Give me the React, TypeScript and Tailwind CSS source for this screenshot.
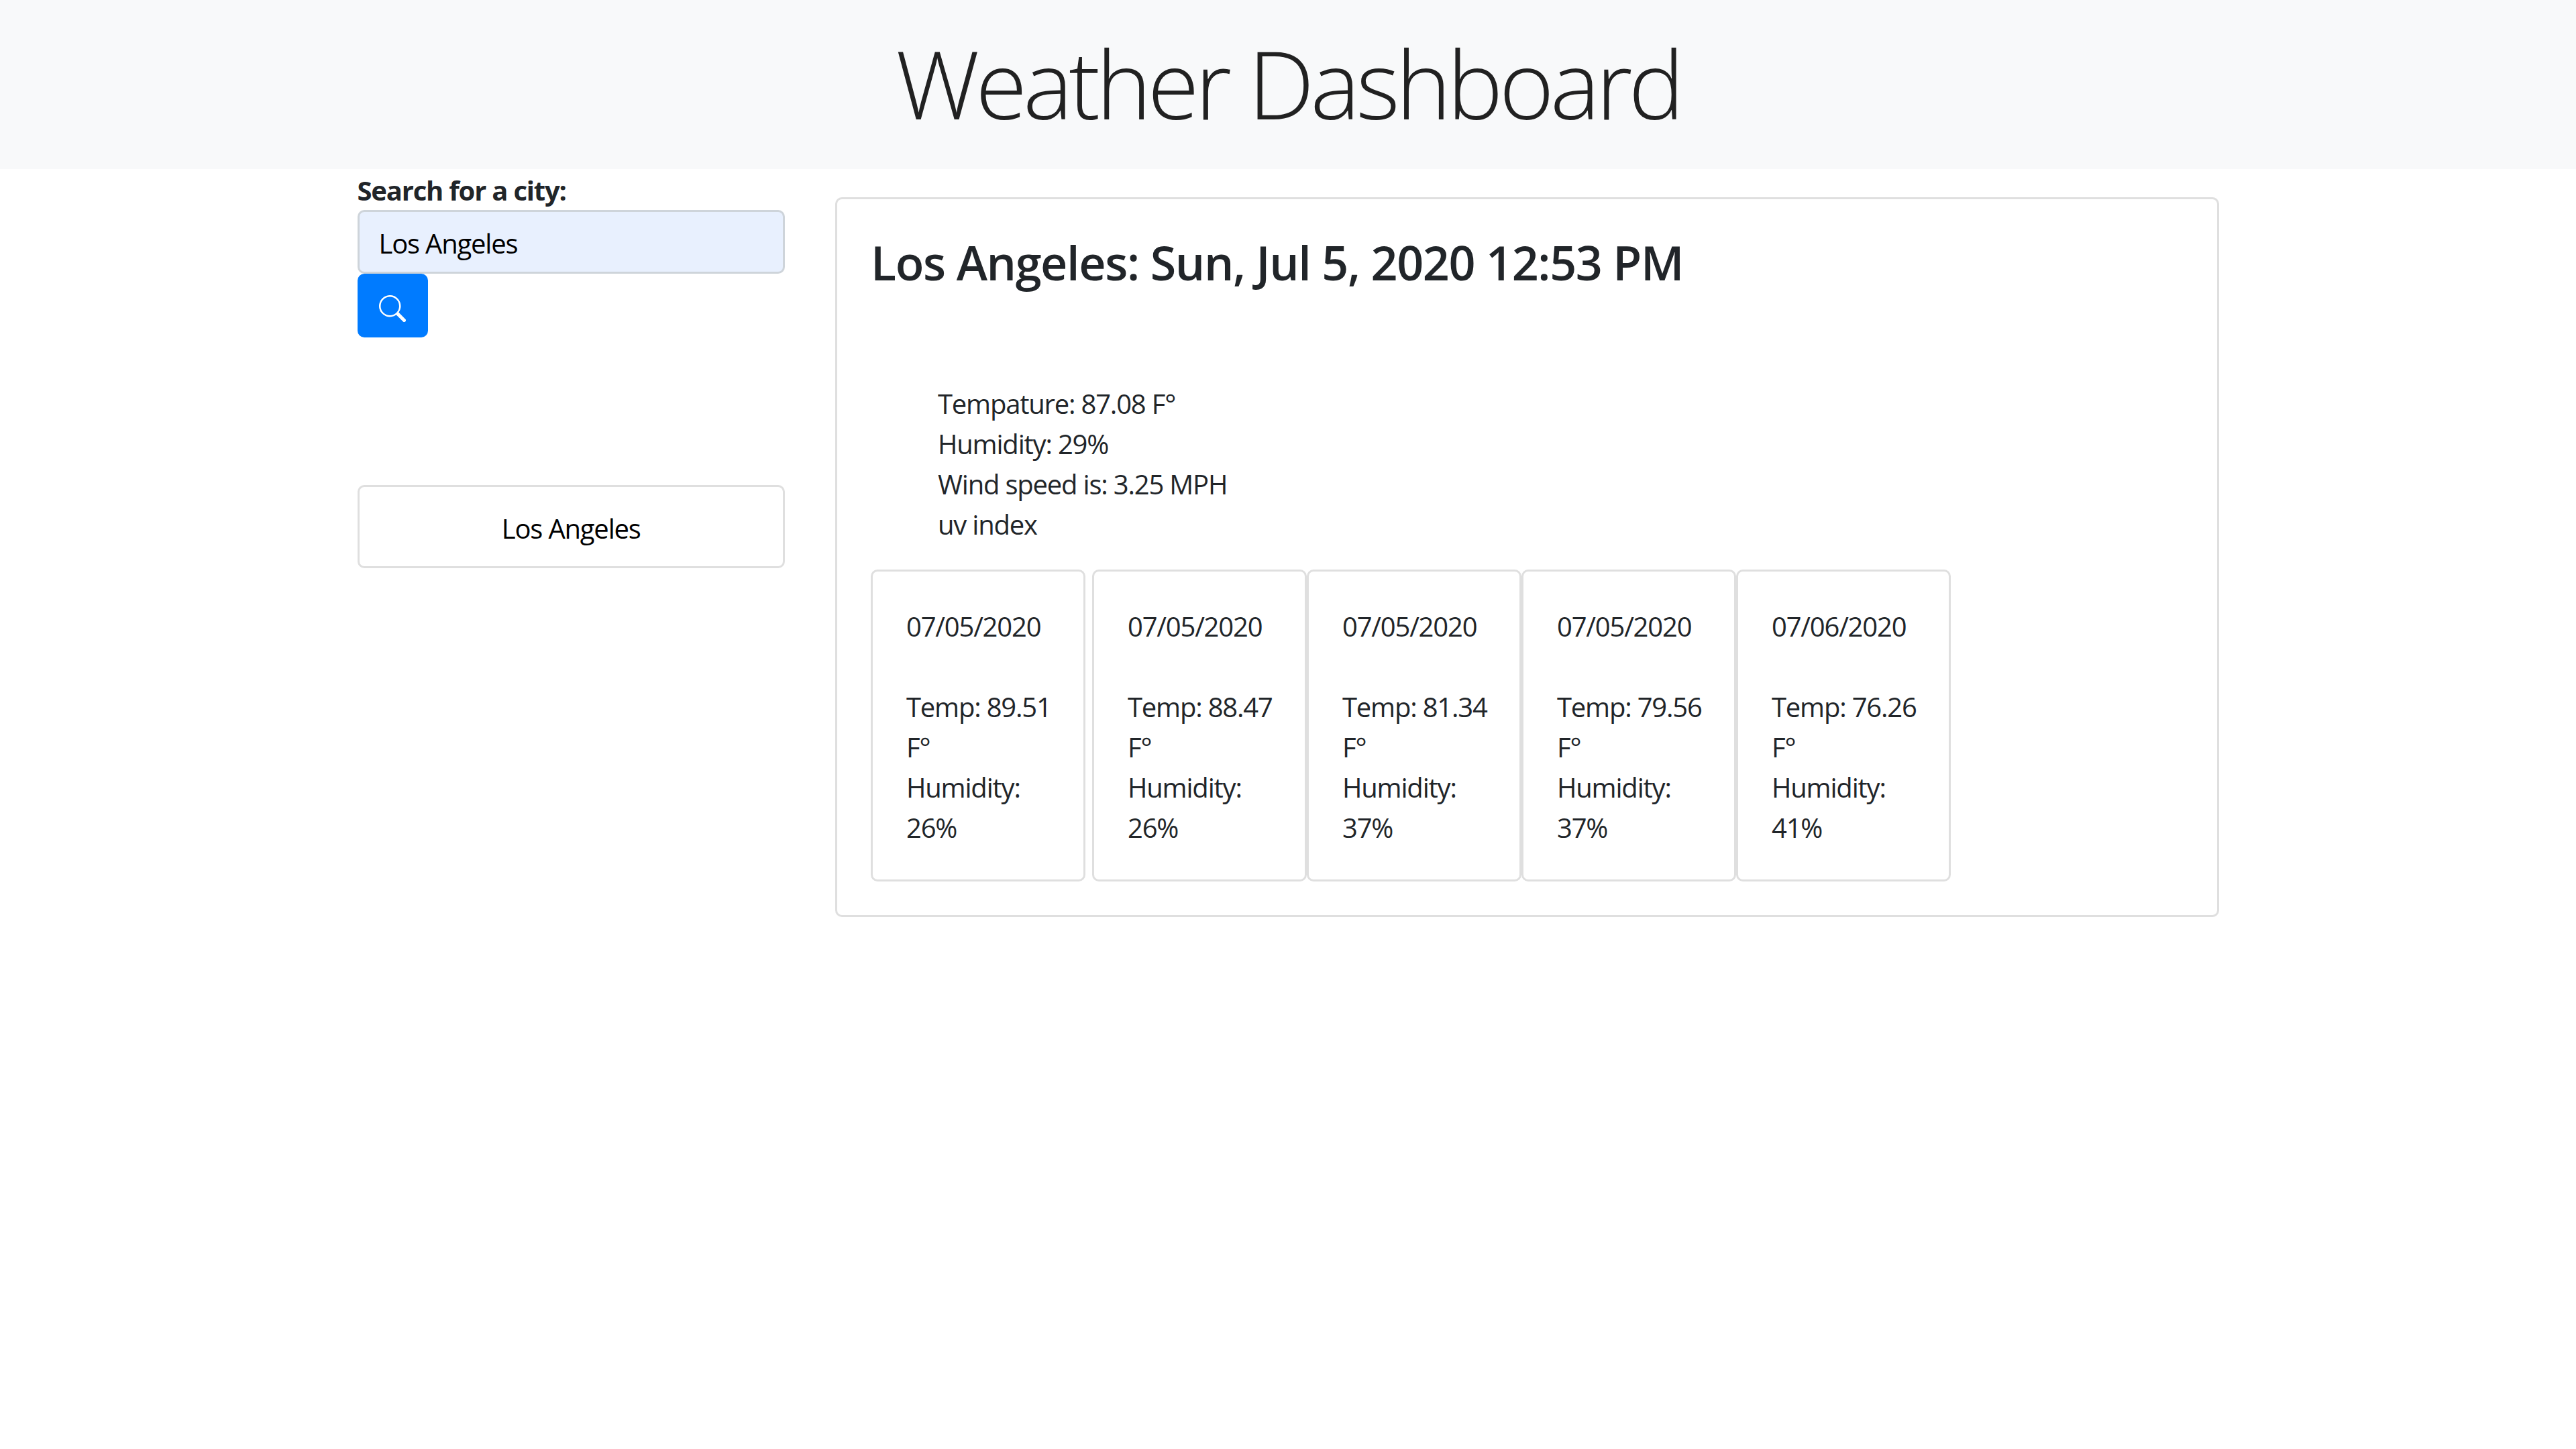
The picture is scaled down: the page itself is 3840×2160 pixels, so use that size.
import { BsSearch } from "react-icons/bs";

const forecast = [
  { date: "07/05/2020", temp: "89.51", humidity: "26" },
  { date: "07/05/2020", temp: "88.47", humidity: "26" },
  { date: "07/05/2020", temp: "81.34", humidity: "37" },
  { date: "07/05/2020", temp: "79.56", humidity: "37" },
  { date: "07/06/2020", temp: "76.26", humidity: "41" },
];

export default function App() {
  return (
    <div className="min-h-screen bg-white font-['Open_Sans','Noto_Sans',sans-serif] text-[40px] leading-[60px] tracking-[-1.2px] text-[#212529]">
      <header className="h-[252px] bg-[#f8f9fa] pt-[40px] text-center">
        <h1 className="text-[140px] font-light leading-[1.2] tracking-[-6px] text-[#212121]">Weather Dashboard</h1>
      </header>

      <main className="mx-auto flex w-[2850px]">
        <aside className="w-[712.5px] px-[37.5px]">
          <label className="block h-[61px] pt-[2px] font-bold">Search for a city:</label>
          <input
            readOnly
            value="Los Angeles"
            className="block h-[95px] w-full rounded-[10px] border-[3px] border-[#ced4da] bg-[#e8f0fe] px-[29px] pt-[3px] text-black"
          />
          <button className="flex h-[95px] w-[105px] items-center justify-center rounded-[10px] bg-[#007bff] pt-[8px] text-white">
            <BsSearch size={40} />
          </button>
          <div className="mt-[220px] flex h-[124px] items-center justify-center rounded-[10px] border-[3px] border-[#dfdfdf] pt-[5px] text-black">
            Los Angeles
          </div>
        </aside>

        <section className="w-[2137.5px] px-[37.5px] pt-[42px]">
          <div className="rounded-[10px] border-[3px] border-[#dfdfdf] p-[50px]">
            <h3 className="pt-[2px] text-[70px] font-semibold leading-[84px] tracking-[-1.35px]">
              Los Angeles: Sun, Jul 5, 2020 12:53 PM
            </h3>
            <ul className="mt-[139px] mb-[37px] pl-[100px]">
              <li>Tempature: 87.08 F°</li>
              <li>Humidity: 29%</li>
              <li>Wind speed is: 3.25 MPH</li>
              <li>uv index</li>
            </ul>
            <div className="flex">
              {forecast.map((day, i) => (
                <div
                  key={i}
                  className={`h-[465px] w-[320px] rounded-[10px] border-[3px] border-[#dfdfdf] pt-[52px] pl-[50px] pr-[36px] ${i === 0 ? "mr-[10px]" : ""}`}
                >
                  <p>{day.date}</p>
                  <p className="mt-[60px]">Temp: {day.temp} F°</p>
                  <p>Humidity: {day.humidity}%</p>
                </div>
              ))}
            </div>
          </div>
        </section>
      </main>
    </div>
  );
}
